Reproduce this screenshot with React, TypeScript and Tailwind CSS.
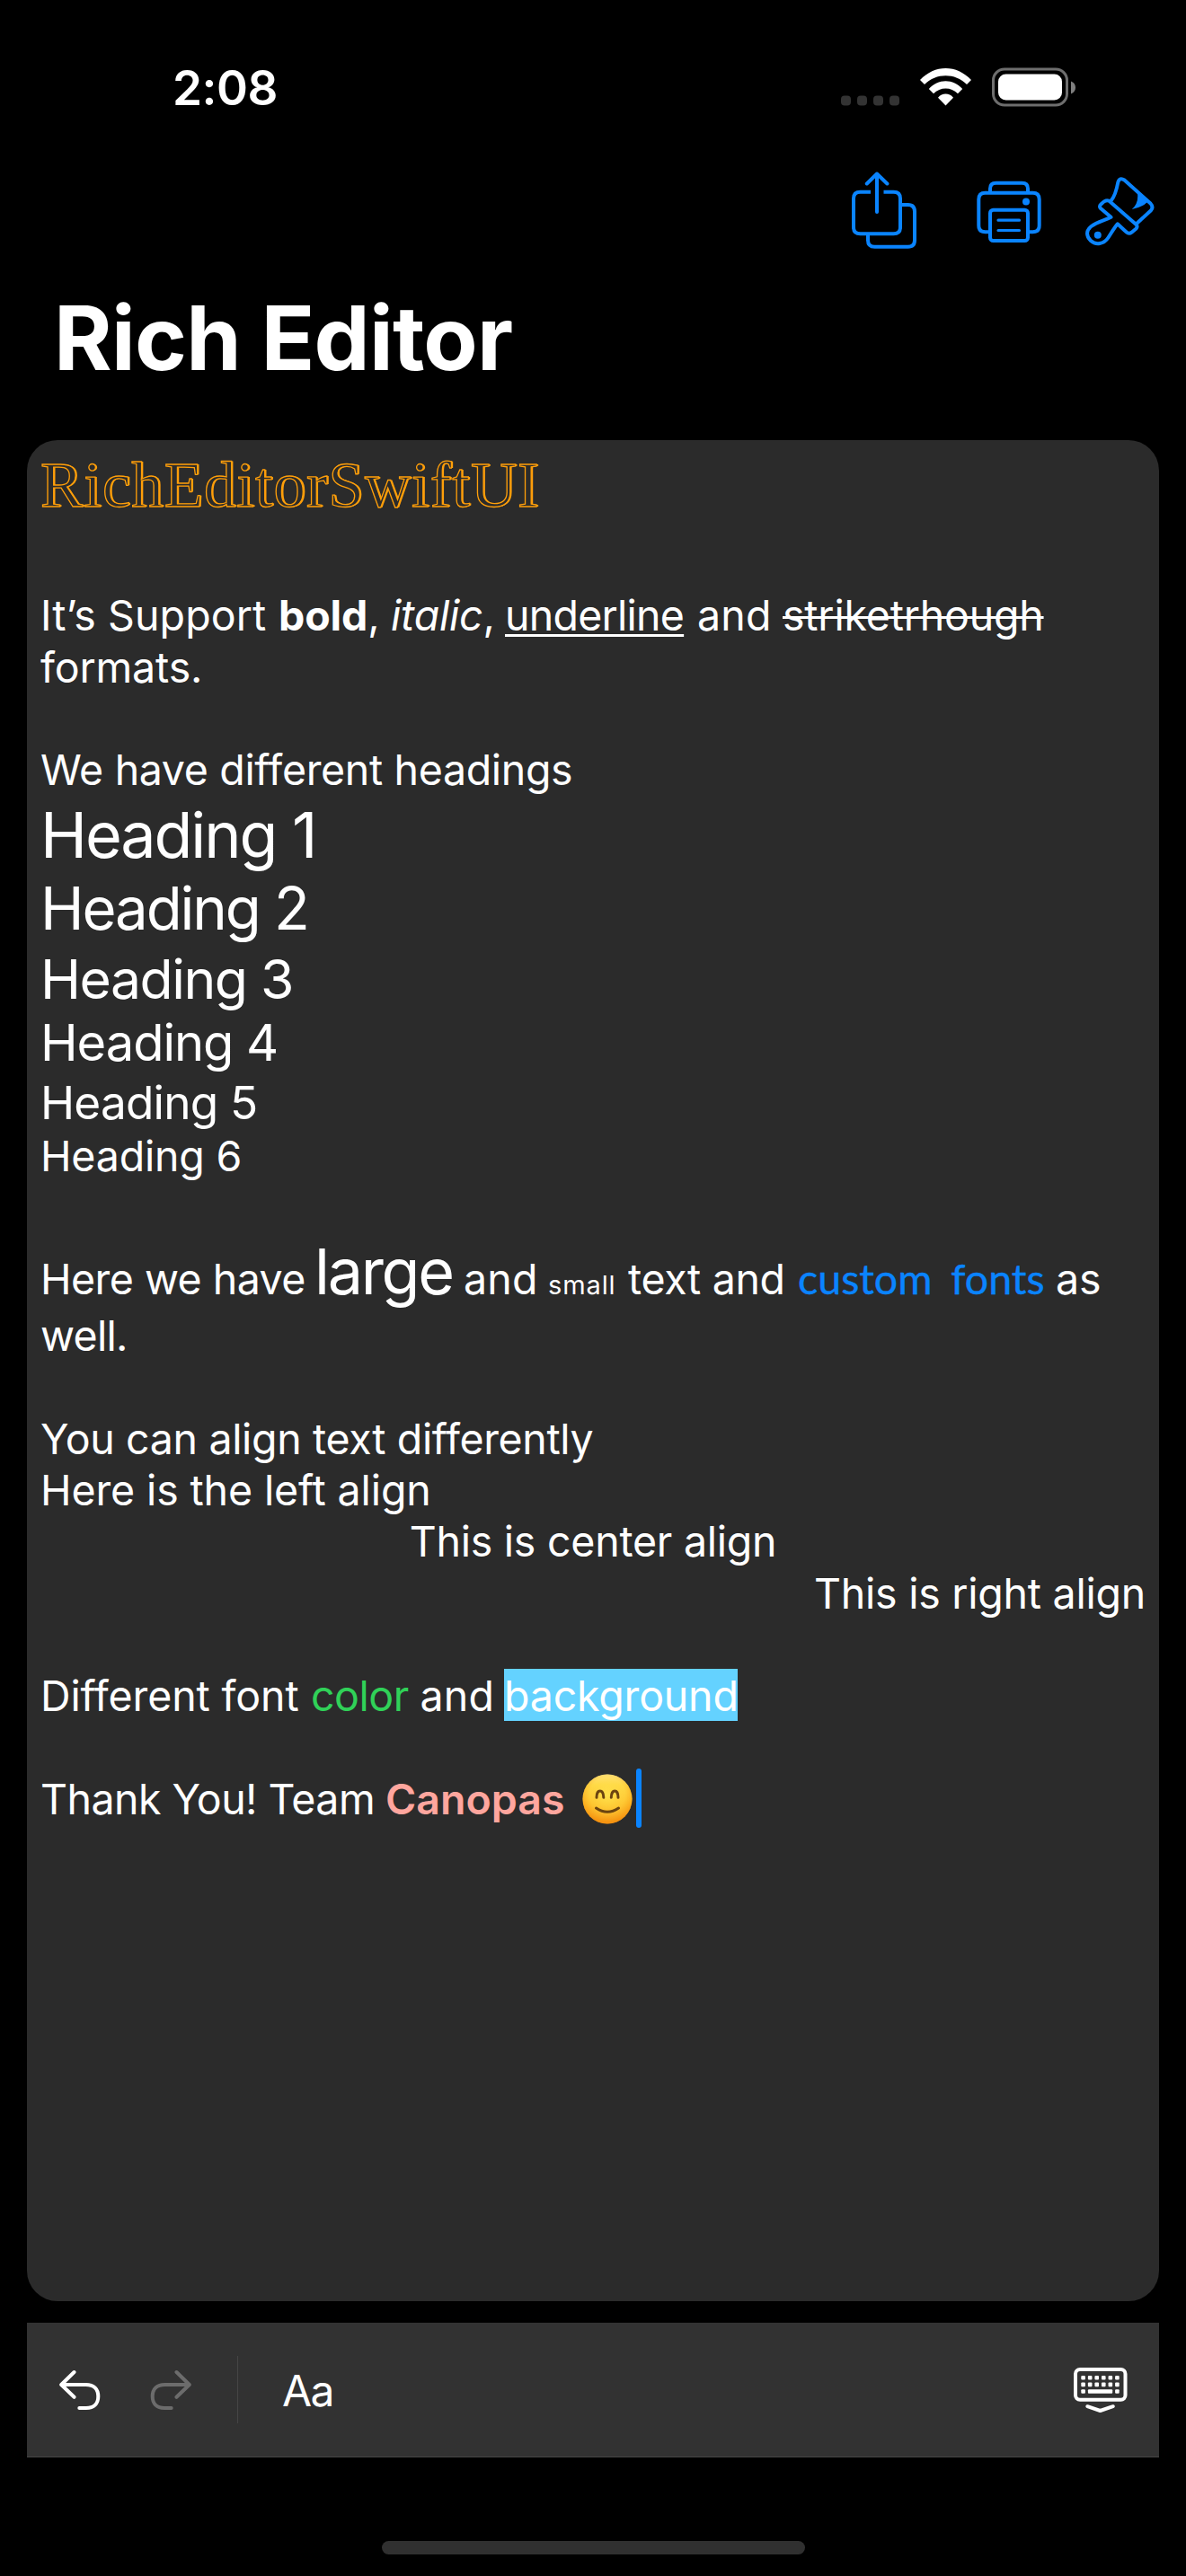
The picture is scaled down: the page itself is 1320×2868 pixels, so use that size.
import React from "react";

function StatusIcons() {
  return (
    <svg className="mr-[122px] h-[44px] w-[262px]" viewBox="937 74.5 262 44" fill="none">
      {[937, 955, 973, 991].map((x) => (
        <rect key={x} x={x} y="106" width="11" height="11" rx="4" fill="#333333" />
      ))}
      <path
        d="M1025 88.500 C1041 71 1066 71 1082 88.500 L1077 93.500 C1064 80.500 1043 80.500 1030 93.500 Z"
        fill="#fff"
      />
      <path
        d="M1034.800 98.500 C1045 86.700 1062 86.700 1072.200 98.500 L1067 103.700 C1059.500 96 1047.500 96 1040 103.700 Z"
        fill="#fff"
      />
      <path d="M1045 108.200 C1049.500 102.700 1057.500 102.700 1062 108.200 L1053.500 117 Z" fill="#fff" />
      <rect x="1106.500" y="76.500" width="82" height="40" rx="12.500" stroke="#6e6e6e" strokeWidth="3" />
      <rect x="1112" y="82" width="71" height="29" rx="8.500" fill="#fff" />
      <path d="M1193 90 C1196.500 91.300 1198 94 1198 97 C1198 100 1196.500 102.500 1193 104 Z" fill="#7f7f7f" />
    </svg>
  );
}

function ShareIcon() {
  return (
    <svg
      className="h-[86px] w-[72px]"
      viewBox="948 191 72 86"
      fill="none"
      stroke="#0a84ff"
      strokeWidth="4"
      strokeLinejoin="round"
    >
      <path d="M969 213.700 H957.500 Q950 213.700 950 221 V253 Q950 260.300 957.500 260.300 H994.500 Q1002 260.300 1002 253 V221 Q1002 213.700 994.500 213.700 H983.500" />
      <path strokeLinecap="round" d="M976 193.500 V236 M964.800 204.500 L976 193.500 L987.400 204.500" />
      <path d="M1004 228 H1010.500 Q1018 228 1018 235.500 V267.500 Q1018 274.800 1010.500 274.800 H973.500 Q966 274.800 966 267.500 V262" />
    </svg>
  );
}

function PrinterIcon() {
  return (
    <svg
      className="ml-[67px] h-[86px] w-[72px]"
      viewBox="1087 191 72 86"
      fill="none"
      stroke="#0a84ff"
      strokeWidth="4"
      strokeLinejoin="round"
    >
      <path d="M1102 213 V210 Q1102 203.700 1108.500 203.700 H1137.500 Q1144 203.700 1144 210 V213" />
      <path d="M1100 258.200 H1096.500 Q1089.300 258.200 1089.300 251 V222 Q1089.300 214.700 1096.500 214.700 H1149.500 Q1156.700 214.700 1156.700 222 V251 Q1156.700 258.200 1149.500 258.200 H1146" />
      <rect x="1102" y="233.700" width="42" height="34.300" rx="3.500" />
      <path strokeWidth="3.200" strokeLinecap="round" d="M1111 245.200 H1134.500 M1111 256.500 H1134.500" />
      <circle cx="1142" cy="224.400" r="4" fill="#0a84ff" stroke="none" />
    </svg>
  );
}

function BrushIcon() {
  return (
    <svg
      className="ml-[49px] h-[86px] w-[78px]"
      viewBox="1208 191 78 86"
      fill="none"
      stroke="#0a84ff"
      strokeWidth="4"
      strokeLinejoin="round"
      strokeLinecap="round"
    >
      <path d="M1236.700 223.300 C1241.500 217.500 1243 210 1244.300 203 Q1246 197 1251.500 200.500 L1280.500 226.500 Q1284.200 230.500 1281 234.200 L1265.500 248.500" />
      <path d="M1234.500 223.800 L1264.300 249.800 Q1267 252.300 1264 255 L1259.500 258.700 Q1256.500 261 1253.500 258.300 L1243.800 249.300 C1239.500 254.500 1236.500 260 1233.500 264.500 C1228.500 272.200 1219.500 273 1214 268 C1208.500 262.800 1208.800 256.500 1214.500 252 C1221 247.200 1229 245.500 1236.500 241.800 L1225 232 Q1222.800 229.700 1225.500 227.300 Q1230.500 221.800 1234.500 223.800 Z" />
      <path d="M1266 215 L1277 225 Q1271 231 1259.800 233 Q1267.500 226.500 1266 215 Z" fill="#0a84ff" stroke="none" />
      <circle cx="1221.800" cy="261.700" r="4" fill="#0a84ff" stroke="none" />
    </svg>
  );
}

function SmileEmoji() {
  return (
    <svg
      role="img"
      aria-label="smiling face"
      className="inline-block h-[56px] w-[56px] [vertical-align:-11px]"
      viewBox="0 0 56 56"
    >
      <defs>
        <linearGradient id="face" x1="0" y1="0" x2="0" y2="1">
          <stop offset="0" stopColor="#fff3b0" />
          <stop offset="0.220" stopColor="#ffe04f" />
          <stop offset="0.600" stopColor="#fdbb26" />
          <stop offset="1" stopColor="#f38d10" />
        </linearGradient>
        <radialGradient id="glow" cx="0.500" cy="0.420" r="0.550">
          <stop offset="0" stopColor="#ffe34e" stopOpacity="0.900" />
          <stop offset="0.650" stopColor="#ffd23c" stopOpacity="0.500" />
          <stop offset="1" stopColor="#f6930f" stopOpacity="0.550" />
        </radialGradient>
      </defs>
      <circle cx="28" cy="28" r="27.500" fill="url(#face)" />
      <circle cx="28" cy="28" r="27.500" fill="url(#glow)" />
      <g fill="none" stroke="#6b4410" strokeLinecap="round">
        <path
          strokeWidth="3"
          d="M16 26.300 C16 16.500 23.500 16.500 23.800 26.300 M32.300 26.300 C32.500 16.500 40 16.500 40 26.300"
        />
        <path strokeWidth="3" d="M15.500 38 Q28 46.500 40.500 38" />
      </g>
    </svg>
  );
}

function UndoArrow({ flipped = false }: { flipped?: boolean }) {
  return (
    <svg
      className={flipped ? "ml-[55px] size-[46px] -scale-x-100 text-[#6c6c6c]" : "size-[46px] text-white"}
      viewBox="66 2638 46 46"
      fill="none"
      stroke="currentColor"
      strokeWidth="4"
      strokeLinecap="round"
      strokeLinejoin="round"
    >
      <path d="M82.500 2641 L68.200 2655 L82.500 2668.800" />
      <path d="M69 2655 H95.500 C104.500 2655 109.300 2660 109.300 2668 C109.300 2676 104.500 2681 96 2681 H88.300" />
    </svg>
  );
}

function HideKeyboardIcon() {
  return (
    <svg className="mr-[35px] ml-auto h-[52px] w-[61px]" viewBox="1194 2635 61 52" fill="none">
      <rect x="1197" y="2638" width="55.500" height="33.800" rx="5" stroke="#fff" strokeWidth="4" />
      {[0, 1, 2, 3, 4, 5].map((i) => (
        <g key={i} fill="#fff">
          <rect x={1203.3 + i * 7.56} y="2645" width="4.600" height="4.600" rx="1" />
          <rect x={1203.3 + i * 7.56} y="2652.600" width="4.600" height="4.600" rx="1" />
        </g>
      ))}
      <g fill="#fff">
        <rect x="1203.300" y="2660.200" width="4.600" height="4.600" rx="1" />
        <rect x="1210.900" y="2660.200" width="27.300" height="4.600" rx="1" />
        <rect x="1241.100" y="2660.200" width="4.600" height="4.600" rx="1" />
      </g>
      <path
        d="M1210.300 2679.200 L1224.500 2684 L1238.800 2679.200"
        stroke="#fff"
        strokeWidth="4"
        strokeLinecap="round"
        strokeLinejoin="round"
      />
    </svg>
  );
}

function Line({ className = "", children }: { className?: string; children?: React.ReactNode }) {
  return <div className={"h-[57.28px] whitespace-pre " + className}>{children}</div>;
}

export default function App() {
  return (
    <div className="flex h-[2868px] w-[1320px] flex-col overflow-hidden bg-black font-['Inter',sans-serif] text-white">
      <header className="flex flex-col">
        <div className="flex h-[191px] items-center justify-between pt-[2px]">
          <span className="ml-[192px] pt-[2px] text-[53px] leading-[60px] font-semibold tracking-[-0.500px]">2:08</span>
          <StatusIcons />
        </div>
        <div className="flex h-[86px] justify-end pr-[34px]">
          <ShareIcon />
          <PrinterIcon />
          <BrushIcon />
        </div>
        <h1 className="h-[213px] pl-[60px] text-[98.600px] leading-[198px] font-bold tracking-[-0.760px]">Rich Editor</h1>
      </header>

      <main className="mx-[30px] h-[2072px] rounded-[34px] bg-[#2b2b2b] px-[15px] text-[46.500px] leading-[57.28px]">
        <div className="h-[167.450px] font-['Liberation_Serif',serif] text-[71px] leading-[101px] tracking-[0.900px] text-[#2b2b2b] [-webkit-text-stroke:1.3px_#ff9f0a] [text-shadow:1.8px_0_0_#ff9f0a]">
          RichEditorSwiftUI
        </div>

        <Line>
          <span className="inline-block w-[265px] tracking-[0.100px]">It’s Support</span>
          <span className="inline-block w-[125px]">
            <b className="font-bold tracking-[-0.140px]">bold</b>,
          </span>
          <span className="inline-block w-[127px]">
            <i className="tracking-[-0.230px]">italic</i>,
          </span>
          <span className="inline-block w-[214px]">
            <span className="tracking-[-0.750px] underline decoration-[3px] underline-offset-[4px]">underline</span>
          </span>
          <span className="inline-block w-[95px] tracking-[0.200px]">and</span>
          <span className="tracking-[-0.200px] line-through decoration-[3px]">striketrhough</span>
        </Line>
        <Line className="tracking-[-0.150px]">formats.</Line>
        <Line />
        <Line className="tracking-[-0.340px]">We have different headings</Line>
        <h1 className="text-[70px] leading-[85.900px] tracking-[-2.080px]">Heading 1</h1>
        <h2 className="text-[65.300px] leading-[80.300px] tracking-[-2.090px]">Heading 2</h2>
        <h3 className="text-[60.600px] leading-[74.400px] tracking-[-1.470px]">Heading 3</h3>
        <h4 className="text-[56px] leading-[68.500px] tracking-[-1.040px]">Heading 4</h4>
        <h5 className="text-[51.300px] leading-[63px] tracking-[-0.800px]">Heading 5</h5>
        <h6 className="leading-[57.28px] tracking-[-0.190px]">Heading 6</h6>
        <Line />

        <div className="h-[86.100px] whitespace-pre">
          <span className="inline-block w-[305px] tracking-[-0.530px]">Here we have</span>
          <span className="inline-block w-[166px] text-[70px] leading-[86.100px] tracking-[-2.300px]">large</span>
          <span className="inline-block w-[94px] tracking-[0.200px]">and</span>
          <span className="inline-block w-[89px] text-[29px] tracking-[0.900px]">small</span>
          <span className="inline-block w-[189px] tracking-[-0.340px]">text and</span>
          <span className="inline-block w-[287px] font-['Lato',sans-serif] tracking-[0px] text-[#0a84ff] [word-spacing:9px] [-webkit-text-stroke:0.4px_#0a84ff]">
            custom fonts
          </span>
          <span className="inline-block">as</span>
        </div>
        <Line className="tracking-[-0.710px]">well.</Line>
        <Line />
        <Line className="tracking-[-0.340px]">You can align text differently</Line>
        <Line className="tracking-[-0.120px]">Here is the left align</Line>
        <Line className="text-center tracking-[-0.240px]">This is center align</Line>
        <Line className="text-right tracking-[-0.250px]">This is right align</Line>
        <Line />
        <Line>
          <span className="inline-block w-[301px] tracking-[-0.120px]">Different font</span>
          <span className="inline-block w-[121.500px] tracking-[-0.450px] text-[#30d158]">color</span>
          <span className="inline-block w-[93.500px] tracking-[0.200px]">and</span>
          <span className="-mt-[3px] inline-block h-[58px] w-[260px] bg-[#64d2ff] leading-[61px] tracking-[-0.200px]">
            background
          </span>
        </Line>
        <Line />
        <Line>
          <span className="inline-block w-[384px] tracking-[-0.550px]">Thank You! Team</span>
          <span className="inline-block w-[218.500px] font-semibold text-[#ffa69e]">Canopas</span>
          <SmileEmoji />
          <span className="-my-[10px] ml-[4.500px] inline-block h-[66px] w-[6px] rounded-[3px] bg-[#0a84ff] [vertical-align:-5px]" />
        </Line>
      </main>

      <div className="mx-[30px] mt-[24px] flex h-[150px] items-center border-b border-[#464646] bg-[#323232] pl-[36px]">
        <UndoArrow />
        <UndoArrow flipped />
        <div className="ml-[51px] h-[75px] w-px bg-[#454545]" />
        <span className="ml-[49px] pt-[2px] text-[48px] leading-[60px] tracking-[-1.700px]">Aa</span>
        <HideKeyboardIcon />
      </div>

      <div className="mt-[93px] ml-[425px] h-[15px] w-[471px] rounded-full bg-[#303030]" />
    </div>
  );
}
